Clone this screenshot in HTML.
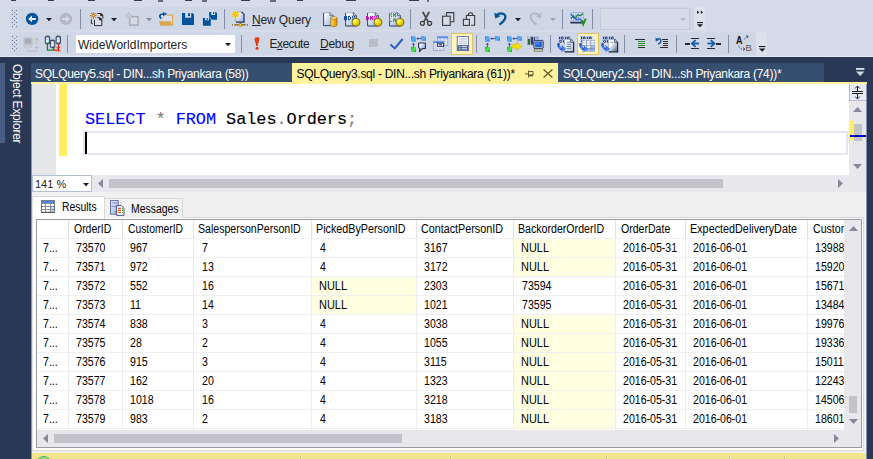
<!DOCTYPE html>
<html><head><meta charset="utf-8">
<style>
*{margin:0;padding:0;box-sizing:border-box}
html,body{width:873px;height:459px;overflow:hidden;background:#293955}
body{font-family:"Liberation Sans",sans-serif;font-size:12px;color:#1e1e1e;position:relative}
.a{position:absolute}
#top{left:0;top:0;width:873px;height:57px;background:#d6dbe9;border-bottom:1px solid #e4e8f2}
.tb{background:#cfd6e5}
.sep{width:1px;background:#858fa6}
.grip{width:6px;background-image:radial-gradient(circle at 1px 1px,#5f6a86 0.75px,transparent 1.1px),radial-gradient(circle at 1px 1px,#5f6a86 0.75px,transparent 1.1px);background-size:4px 4px,4px 4px;background-position:0 0,2px 2px}
.tab{top:63px;height:19px;color:#fff;font-size:12px;line-height:19px;white-space:nowrap;background:#364e6f}
.tx{white-space:nowrap;transform-origin:0 50%}
.g{font-size:12.3px;line-height:19px;color:#000;white-space:nowrap;transform-origin:0 0}
.hl{background:#ffffe1}
.h{letter-spacing:-0.36px}
.d{letter-spacing:-0.2px}
.vl{width:1px;background:#ededed;top:220px;height:210px}
.rl{height:1px;background:#f0f0f0;left:37px;width:807px}
svg{position:absolute;overflow:visible}
</style></head><body>
<!-- TOP TOOLBARS -->
<div id="top" class="a"></div>
<div class="a tb" style="left:10px;top:7px;width:684px;height:23px"></div>
<div class="a" style="left:694px;top:7px;width:11px;height:23px;background:#dde1ed"></div>
<div class="a tb" style="left:10px;top:32px;width:746px;height:23px"></div>
<div class="a" style="left:756px;top:32px;width:11px;height:23px;background:#dde1ed"></div>
<div id="menubits"><div class="a" style="left:10.6px;top:0;width:5.0px;height:1px;background:#1e2233;opacity:0.85"></div><div class="a" style="left:48px;top:0;width:6px;height:1px;background:#1e2233;opacity:0.85"></div><div class="a" style="left:88px;top:0;width:6.5px;height:1px;background:#1e2233;opacity:0.85"></div><div class="a" style="left:133.6px;top:0;width:8.8px;height:1px;background:#1e2233;opacity:0.85"></div><div class="a" style="left:158px;top:0;width:5px;height:2px;background:#1e2233;opacity:0.6"></div><div class="a" style="left:185px;top:0;width:6.5px;height:1px;background:#1e2233;opacity:0.85"></div><div class="a" style="left:202px;top:0;width:5px;height:2px;background:#1e2233;opacity:0.6"></div><div class="a" style="left:241.4px;top:0;width:8.3px;height:1px;background:#1e2233;opacity:0.85"></div><div class="a" style="left:270px;top:0;width:6px;height:2px;background:#1e2233;opacity:0.6"></div><div class="a" style="left:297px;top:0;width:6px;height:1px;background:#1e2233;opacity:0.85"></div><div class="a" style="left:346px;top:0;width:10px;height:1px;background:#1e2233;opacity:0.85"></div><div class="a" style="left:409px;top:0;width:10px;height:1px;background:#1e2233;opacity:0.85"></div><div class="a" style="left:427px;top:0;width:1.5px;height:2px;background:#1e2233;opacity:0.6"></div></div>
<div id="tb1">
<svg style="left:12px;top:10px" width="5" height="18" viewBox="0 0 5 18" fill="#717c98" shape-rendering="crispEdges"><rect x="0" y="0" width="1" height="1"/><rect x="4" y="0" width="1" height="1"/><rect x="2" y="2" width="1" height="1"/><rect x="0" y="4" width="1" height="1"/><rect x="4" y="4" width="1" height="1"/><rect x="2" y="6" width="1" height="1"/><rect x="0" y="8" width="1" height="1"/><rect x="4" y="8" width="1" height="1"/><rect x="2" y="10" width="1" height="1"/><rect x="0" y="12" width="1" height="1"/><rect x="4" y="12" width="1" height="1"/><rect x="2" y="14" width="1" height="1"/><rect x="0" y="16" width="1" height="1"/><rect x="4" y="16" width="1" height="1"/></svg>
<!-- back / forward -->
<svg style="left:24px;top:11px" width="16" height="16" viewBox="0 0 16 16"><circle cx="8.1" cy="7.9" r="6.2" fill="#00539c"/><path d="M4 7.9 L8 4.6 V6.9 H11.8 V8.9 H8 V11.2 Z" fill="#e6ebf5"/></svg>
<svg style="left:46px;top:18px" width="6" height="4" viewBox="0 0 6 4"><path d="M0 0H6L3 3.2Z" fill="#1b1b1b"/></svg>
<svg style="left:58px;top:11px" width="16" height="16" viewBox="0 0 16 16"><circle cx="8" cy="7.9" r="6.2" fill="#b3b8c4"/><path d="M12 7.9 L8 4.6 V6.9 H4.2 V8.9 H8 V11.2 Z" fill="#d6dbe9"/></svg>
<div class="a sep" style="left:80px;top:9px;height:20px"></div>
<!-- new project -->
<svg style="left:89px;top:11px" width="16" height="16" viewBox="0 0 16 16"><path d="M8.2 2.5 H11.6 L13.8 4.7 V7.6" fill="none" stroke="#2d2d2d" stroke-width="1"/><path d="M11.2 2 C13 2 14.3 3.4 14.3 5.2 L11.2 5 Z" fill="#2d2d2d"/><path d="M5.5 8.6 V14.6 H12.8 V8.8 L10.6 6.7 H8.2 V8.6 Z" fill="#dcdfea" stroke="none"/><path d="M5.5 8.8 V14.6 H12.8 V8.8 M8.2 6.7 H10.4" fill="none" stroke="#2d2d2d" stroke-width="1"/><path d="M10 6.2 C11.8 6.2 13.3 7.6 13.3 9.4 L10 9.2 Z" fill="#2d2d2d"/><path d="M2.4 8.4 V12.7 H3.8" fill="none" stroke="#2d2d2d" stroke-width="1"/><path d="M4.4 1v6.8M1 4.4h6.8M2 2l4.8 4.8M6.8 2L2 6.8" stroke="#c87a0a" stroke-width="1"/><circle cx="4.4" cy="4.4" r="1.2" fill="#e9dcc4" stroke="#c87a0a" stroke-width="0.9"/></svg>
<svg style="left:111px;top:18px" width="6" height="4" viewBox="0 0 6 4"><path d="M0 0H6L3 3.2Z" fill="#1b1b1b"/></svg>
<!-- add item (disabled) -->
<svg style="left:124px;top:11px" width="16" height="16" viewBox="0 0 16 16"><rect x="5.7" y="5.7" width="8.4" height="8.4" fill="#d9dce7" stroke="#a9adb9" stroke-width="1.6"/><circle cx="4.4" cy="4.4" r="2.8" fill="#d0d5e4"/><path d="M4.4 1.2v6.4M1.2 4.4h6.4M2.2 2.2l4.4 4.4M6.6 2.2L2.2 6.6" stroke="#b4b9c6" stroke-width="0.8"/><circle cx="4.4" cy="4.4" r="1.1" fill="#d6dbe9" stroke="#b4b9c6" stroke-width="0.7"/></svg>
<svg style="left:146px;top:18px" width="6" height="4" viewBox="0 0 6 4"><path d="M0 0H6L3 3.2Z" fill="#8e8e8e"/></svg>
<!-- open -->
<svg style="left:158px;top:11px" width="16" height="16" viewBox="0 0 16 16"><path d="M8.4 4.1 H14.5 V14.6 H4 V9 Z" fill="#dcdde8"/><path d="M8.6 4.1 H14.5 V14.6" fill="none" stroke="#dda347" stroke-width="1"/><path d="M1 10.3 H12.5 L14.6 14.8 H2.5 Z" fill="#d9a550"/><path d="M3.2 7.6 C0.6 5.6 1.4 3 5.2 3" fill="none" stroke="#00539c" stroke-width="1.7"/><path d="M5 1 L9.2 3 L5 5 Z" fill="#00539c"/></svg>
<!-- save -->
<svg style="left:181px;top:12px" width="14" height="14" viewBox="0 0 14 14"><path d="M1 0.9 H11.4 L13 2.5 V12.9 H1 Z" fill="#00539c"/><rect x="4.2" y="0.9" width="6" height="4.8" fill="#dcdfea"/><rect x="7" y="1.2" width="2" height="2.9" fill="#00539c"/></svg>
<!-- save all -->
<svg style="left:202px;top:11px" width="16" height="16" viewBox="0 0 16 16"><path d="M7.1 0.9 H13.8 L15 2.1 V8.7 H7.1 Z" fill="#00539c"/><rect x="9.2" y="0.9" width="4" height="3" fill="#dcdfea"/><rect x="11" y="1.1" width="1.3" height="1.9" fill="#00539c"/><path d="M0.3 6.4 H8 L9.4 7.8 V15.4 H0.3 Z" fill="#cfd6e5"/><path d="M0.9 7 H7.7 L8.8 8.1 V14.8 H0.9 Z" fill="#00539c"/><rect x="3.1" y="7" width="3.8" height="2.3" fill="#dcdfea"/><rect x="4.6" y="7.2" width="1.4" height="1.5" fill="#00539c"/></svg>
<div class="a sep" style="left:224px;top:9px;height:20px"></div>
<!-- new query -->
<svg style="left:232px;top:11px" width="16" height="16" viewBox="0 0 16 16"><defs><linearGradient id="dg" x1="0" y1="0" x2="1" y2="1"><stop offset="0.15" stop-color="#fff"/><stop offset="1" stop-color="#8fa9e2"/></linearGradient></defs><path d="M3.8 1 H9.6 L12 3.4 V11 H3.8 Z" fill="url(#dg)" stroke="#7d8db5" stroke-width="0.7"/><path d="M9.6 1 L12 3.4 V11.2 H4" fill="none" stroke="#2c3a5c" stroke-width="1.2"/><path d="M8.4 11.6V13" stroke="#2c3a5c" stroke-width="1.2"/><path d="M0 13.9H16" stroke="#8a5a00" stroke-width="1.2" stroke-dasharray="1 1.2 4.6 0.2 0 2 4.6 1.2 1 0"/><rect x="7.4" y="12.6" width="2.2" height="2.8" rx="0.8" fill="#ffe11a" stroke="#94650a" stroke-width="0.6"/><circle cx="3.4" cy="3.4" r="3.3" fill="#ffe620"/><path d="M3.4 0.2v6.4M0.2 3.4h6.4M1.1 1.1l4.6 4.6M5.7 1.1L1.1 5.7" stroke="#f59a0c" stroke-width="0.9"/><circle cx="3.4" cy="3.4" r="1" fill="#fff3a0"/></svg>
<div class="a tx" id="nq" style="left:252px;top:11.8px;letter-spacing:-0.12px;font-size:12px;line-height:16px;color:#1e1e1e"><u>N</u>ew Query</div>
<!-- db file -->
<svg style="left:322px;top:11px" width="16" height="16" viewBox="0 0 16 16"><path d="M1.6 1.7 H8 L11 4.7 V14.6 H1.6 Z" fill="url(#dg)" stroke="#9aa6c6" stroke-width="0.8"/><path d="M1.6 2 V14.6 H11 V4.7 L8 1.7" fill="none" stroke="#3d4b6e" stroke-width="1"/><path d="M8 1.7 V4.7 H11" fill="#eef2fb" stroke="#3d4b6e" stroke-width="0.8"/><defs><linearGradient id="cy" x1="0" y1="0" x2="1" y2="0"><stop offset="0" stop-color="#ffd75a"/><stop offset="0.5" stop-color="#f5b21e"/><stop offset="1" stop-color="#d98f0c"/></linearGradient></defs><path d="M8.8 7 V14.2 A3.1 1.3 0 0 0 15 14.2 V7 Z" fill="url(#cy)" stroke="#8a6410" stroke-width="0.7"/><ellipse cx="11.9" cy="7" rx="3.1" ry="1.3" fill="#ffe58a" stroke="#8a6410" stroke-width="0.6"/></svg>
<!-- MDX -->
<svg style="left:344px;top:11px" width="16" height="16" viewBox="0 0 16 16"><defs><radialGradient id="yb" cx="0.35" cy="0.3" r="0.75"><stop offset="0" stop-color="#fffbd0"/><stop offset="0.35" stop-color="#fbe51c"/><stop offset="1" stop-color="#c9a600"/></radialGradient></defs><path d="M1.6 1.7 H9.4 L12.4 4.7 V15 H1.6 Z" fill="url(#dg)" stroke="#9aa6c6" stroke-width="0.8"/><path d="M1.6 2 V15 H12.4 V4.7 L9.4 1.7" fill="none" stroke="#3d4b6e" stroke-width="1"/><path d="M9.4 1.7 V4.7 H12.4" fill="#eef2fb" stroke="#3d4b6e" stroke-width="0.8"/><path d="M0.0 5.1h1.05v0.85h-1.05zM2.0 5.1h1.05v0.85h-1.05zM0.0 5.9h1.05v0.85h-1.05zM1.0 5.9h1.05v0.85h-1.05zM2.0 5.9h1.05v0.85h-1.05zM0.0 6.7h1.05v0.85h-1.05zM1.0 6.7h1.05v0.85h-1.05zM2.0 6.7h1.05v0.85h-1.05zM0.0 7.5h1.05v0.85h-1.05zM2.0 7.5h1.05v0.85h-1.05zM0.0 8.3h1.05v0.85h-1.05zM2.0 8.3h1.05v0.85h-1.05zM4.0 5.1h1.05v0.85h-1.05zM5.0 5.1h1.05v0.85h-1.05zM4.0 5.9h1.05v0.85h-1.05zM6.0 5.9h1.05v0.85h-1.05zM4.0 6.7h1.05v0.85h-1.05zM6.0 6.7h1.05v0.85h-1.05zM4.0 7.5h1.05v0.85h-1.05zM6.0 7.5h1.05v0.85h-1.05zM4.0 8.3h1.05v0.85h-1.05zM5.0 8.3h1.05v0.85h-1.05zM8.0 5.1h1.05v0.85h-1.05zM10.0 5.1h1.05v0.85h-1.05zM8.0 5.9h1.05v0.85h-1.05zM10.0 5.9h1.05v0.85h-1.05zM9.0 6.7h1.05v0.85h-1.05zM8.0 7.5h1.05v0.85h-1.05zM10.0 7.5h1.05v0.85h-1.05zM8.0 8.3h1.05v0.85h-1.05zM10.0 8.3h1.05v0.85h-1.05z" fill="#1c4a9c"/><circle cx="12" cy="11.3" r="4" fill="url(#yb)" stroke="#6e5c00" stroke-width="0.8"/></svg>
<svg style="left:366px;top:11px" width="16" height="16" viewBox="0 0 16 16"><path d="M1.6 1.7 H9.4 L12.4 4.7 V15 H1.6 Z" fill="url(#dg)" stroke="#9aa6c6" stroke-width="0.8"/><path d="M1.6 2 V15 H12.4 V4.7 L9.4 1.7" fill="none" stroke="#3d4b6e" stroke-width="1"/><path d="M9.4 1.7 V4.7 H12.4" fill="#eef2fb" stroke="#3d4b6e" stroke-width="0.8"/><path d="M0.0 5.1h1.05v0.85h-1.05zM1.0 5.1h1.05v0.85h-1.05zM0.0 5.9h1.05v0.85h-1.05zM2.0 5.9h1.05v0.85h-1.05zM0.0 6.7h1.05v0.85h-1.05zM2.0 6.7h1.05v0.85h-1.05zM0.0 7.5h1.05v0.85h-1.05zM2.0 7.5h1.05v0.85h-1.05zM0.0 8.3h1.05v0.85h-1.05zM1.0 8.3h1.05v0.85h-1.05zM4.0 5.1h1.05v0.85h-1.05zM6.0 5.1h1.05v0.85h-1.05zM4.0 5.9h1.05v0.85h-1.05zM5.0 5.9h1.05v0.85h-1.05zM6.0 5.9h1.05v0.85h-1.05zM4.0 6.7h1.05v0.85h-1.05zM5.0 6.7h1.05v0.85h-1.05zM6.0 6.7h1.05v0.85h-1.05zM4.0 7.5h1.05v0.85h-1.05zM6.0 7.5h1.05v0.85h-1.05zM4.0 8.3h1.05v0.85h-1.05zM6.0 8.3h1.05v0.85h-1.05zM8.0 5.1h1.05v0.85h-1.05zM10.0 5.1h1.05v0.85h-1.05zM8.0 5.9h1.05v0.85h-1.05zM10.0 5.9h1.05v0.85h-1.05zM9.0 6.7h1.05v0.85h-1.05zM8.0 7.5h1.05v0.85h-1.05zM10.0 7.5h1.05v0.85h-1.05zM8.0 8.3h1.05v0.85h-1.05zM10.0 8.3h1.05v0.85h-1.05z" fill="#c218b4"/><circle cx="12" cy="11.3" r="4" fill="url(#yb)" stroke="#6e5c00" stroke-width="0.8"/></svg>
<svg style="left:388px;top:11px" width="16" height="16" viewBox="0 0 16 16"><path d="M1.6 1.7 H9.4 L12.4 4.7 V15 H1.6 Z" fill="url(#dg)" stroke="#9aa6c6" stroke-width="0.8"/><path d="M1.6 2 V15 H12.4 V4.7 L9.4 1.7" fill="none" stroke="#3d4b6e" stroke-width="1"/><path d="M9.4 1.7 V4.7 H12.4" fill="#eef2fb" stroke="#3d4b6e" stroke-width="0.8"/><path d="M1.0 2.1h1.05v0.85h-1.05zM3.0 2.1h1.05v0.85h-1.05zM1.0 2.9h1.05v0.85h-1.05zM3.0 2.9h1.05v0.85h-1.05zM2.0 3.7h1.05v0.85h-1.05zM1.0 4.5h1.05v0.85h-1.05zM3.0 4.5h1.05v0.85h-1.05zM1.0 5.3h1.05v0.85h-1.05zM3.0 5.3h1.05v0.85h-1.05zM5.0 2.1h1.05v0.85h-1.05zM7.0 2.1h1.05v0.85h-1.05zM5.0 2.9h1.05v0.85h-1.05zM6.0 2.9h1.05v0.85h-1.05zM7.0 2.9h1.05v0.85h-1.05zM5.0 3.7h1.05v0.85h-1.05zM6.0 3.7h1.05v0.85h-1.05zM7.0 3.7h1.05v0.85h-1.05zM5.0 4.5h1.05v0.85h-1.05zM7.0 4.5h1.05v0.85h-1.05zM5.0 5.3h1.05v0.85h-1.05zM7.0 5.3h1.05v0.85h-1.05z" fill="#2e9e5e"/><path d="M1.0 7.0h1.05v0.85h-1.05zM1.0 7.8h1.05v0.85h-1.05zM1.0 8.6h1.05v0.85h-1.05zM1.0 9.4h1.05v0.85h-1.05zM1.0 10.2h1.05v0.85h-1.05zM2.0 10.2h1.05v0.85h-1.05zM3.0 10.2h1.05v0.85h-1.05zM6.0 7.0h1.05v0.85h-1.05zM5.0 7.8h1.05v0.85h-1.05zM7.0 7.8h1.05v0.85h-1.05zM5.0 8.6h1.05v0.85h-1.05zM6.0 8.6h1.05v0.85h-1.05zM7.0 8.6h1.05v0.85h-1.05zM5.0 9.4h1.05v0.85h-1.05zM7.0 9.4h1.05v0.85h-1.05zM5.0 10.2h1.05v0.85h-1.05zM7.0 10.2h1.05v0.85h-1.05z" fill="#2e9e5e"/><circle cx="12" cy="11.3" r="4" fill="url(#yb)" stroke="#6e5c00" stroke-width="0.8"/></svg>
<div class="a sep" style="left:410px;top:9px;height:20px"></div>
<!-- cut copy paste -->
<svg style="left:419px;top:11px" width="16" height="16" viewBox="0 0 16 16"><path d="M3.2 1 L4.6 1 L9.6 10.6 L8.6 11 Z M10.8 1 L9.4 1 L4.4 10.6 L5.4 11 Z" fill="#3d3d3d" stroke="#3d3d3d" stroke-width="0.5"/><circle cx="3.4" cy="12.3" r="2" fill="none" stroke="#3d3d3d" stroke-width="1.3"/><circle cx="10.6" cy="12.3" r="2" fill="none" stroke="#3d3d3d" stroke-width="1.3"/></svg>
<svg style="left:441px;top:11px" width="16" height="16" viewBox="0 0 16 16"><path d="M5.5 5 V1.6 H12.8 V10.8 H9.4" fill="none" stroke="#3d3d3d" stroke-width="1.1"/><rect x="1.6" y="5.2" width="7.6" height="9.2" fill="#d6dbe9" stroke="#3d3d3d" stroke-width="1.1"/></svg>
<svg style="left:462px;top:11px" width="16" height="16" viewBox="0 0 16 16"><path d="M4.4 8 V4.5 H12.6 V14.3 H9" fill="#d9dce8" stroke="#3d3d3d" stroke-width="1.1"/><path d="M6.2 4.3 C6.2 0.8 10.8 0.8 10.8 4.3" fill="none" stroke="#3d3d3d" stroke-width="1.1"/><rect x="1.4" y="8.4" width="6" height="6" fill="#d6dbe9" stroke="#3d3d3d" stroke-width="1.1"/></svg>
<div class="a sep" style="left:484px;top:9px;height:20px"></div>
<!-- undo redo -->
<svg style="left:493px;top:11px" width="16" height="16" viewBox="0 0 16 16"><path d="M3.4 4.4 C8 0.2 13.6 3.2 12 7.6 C11 10.2 8.6 12 6.4 13.6" fill="none" stroke="#00539c" stroke-width="2.3"/><path d="M1.2 1.6 L2.2 7.4 L7.4 5.2 Z" fill="#00539c"/></svg>
<svg style="left:515px;top:18px" width="6" height="4" viewBox="0 0 6 4"><path d="M0 0H6L3 3.2Z" fill="#1b1b1b"/></svg>
<svg style="left:528px;top:11px" width="16" height="16" viewBox="0 0 16 16"><path d="M11.6 4.4 C7 0.2 1.4 3.2 3 7.6 C4 10.2 6.4 12 8.6 13.6" fill="none" stroke="#b3b8c4" stroke-width="2.3"/><path d="M13.8 1.6 L12.8 7.4 L7.6 5.2 Z" fill="#b3b8c4"/></svg>
<svg style="left:550px;top:18px" width="6" height="4" viewBox="0 0 6 4"><path d="M0 0H6L3 3.2Z" fill="#9ea3ae"/></svg>
<div class="a sep" style="left:562px;top:9px;height:20px"></div>
<!-- chart -->
<svg style="left:570px;top:11px" width="17" height="16" viewBox="0 0 17 16"><rect x="0.5" y="1.2" width="13" height="10" fill="#f4f7fe"/><path d="M0.5 1.7H13.5M0.5 4.2H13.5M0.5 6.7H13.5M0.5 9.2H13.5M1 1.2V11.2M3.5 1.2V11.2M6 1.2V11.2M8.5 1.2V11.2M11 1.2V11.2M13.4 1.2V11.2" stroke="#6f90e0" stroke-width="0.6"/><path d="M0.3 11.6 H13.8" stroke="#26365a" stroke-width="1.8"/><path d="M1 7.6 L3.4 5 L5.6 6.8 L8 3.6 L10 4.8 L13 2.6" fill="none" stroke="#1f8a2f" stroke-width="1.2"/><path d="M1 2.8 L3.6 6.6 L6.6 8.6 L9 8 L12.6 9.8" fill="none" stroke="#2356d8" stroke-width="1.2"/><path d="M11.6 9.4 L13.2 13.4 L15.8 7.6" fill="none" stroke="#1f8f1f" stroke-width="1.9"/></svg>
<div class="a sep" style="left:592px;top:9px;height:20px"></div>
<div class="a" style="left:600px;top:8px;width:90px;height:22px;border:1px solid #c3cadb;background:#d6dbe9"></div>
<svg style="left:680px;top:18px" width="6" height="4" viewBox="0 0 6 4"><path d="M0 0H6L3 3.2Z" fill="#b3b8c4"/></svg>
<!-- overflow -->
<svg style="left:697px;top:10px" width="7" height="18" viewBox="0 0 7 18"><path d="M0 0.4 L2.2 2.2 L0 4 Z M3.8 0.4 L6 2.2 L3.8 4 Z" fill="#1b1b1b"/><rect x="0" y="12" width="6" height="1.1" fill="#1b1b1b"/><path d="M0 14.2 H6 L3 17.2 Z" fill="#1b1b1b"/></svg>
</div><!--/tb1-->
<div id="tb2">
<svg style="left:12px;top:36px" width="5" height="16" viewBox="0 0 5 16" fill="#717c98" shape-rendering="crispEdges"><rect x="0" y="0" width="1" height="1"/><rect x="4" y="0" width="1" height="1"/><rect x="2" y="2" width="1" height="1"/><rect x="0" y="4" width="1" height="1"/><rect x="4" y="4" width="1" height="1"/><rect x="2" y="6" width="1" height="1"/><rect x="0" y="8" width="1" height="1"/><rect x="4" y="8" width="1" height="1"/><rect x="2" y="10" width="1" height="1"/><rect x="0" y="12" width="1" height="1"/><rect x="4" y="12" width="1" height="1"/><rect x="2" y="14" width="1" height="1"/></svg>
<!-- grey computer (disabled connect) -->
<svg style="left:23px;top:36px" width="16" height="16" viewBox="0 0 16 16"><rect x="0.6" y="1.6" width="9" height="7.8" rx="0.6" fill="#bcc0ca"/><rect x="1.8" y="2.7" width="6.4" height="4.8" fill="#a9adb8"/><rect x="0.8" y="10" width="8.6" height="2.2" rx="0.5" fill="#c6cad3"/><rect x="11.6" y="1.3" width="4" height="7" rx="0.5" fill="#c9cdd6"/><rect x="12.4" y="2.6" width="2.4" height="1.2" fill="#b4b8c2"/><path d="M4.6 12.6 V15.2 H13.6 V11" fill="none" stroke="#b9bdc7" stroke-width="1"/><path d="M11.3 12 L13.6 9.4 L15.9 12 Z" fill="#b9bdc7"/></svg>
<!-- servers w/ red x -->
<svg style="left:45px;top:36px" width="16" height="16" viewBox="0 0 16 16"><defs><linearGradient id="sg" x1="0" y1="0" x2="0" y2="1"><stop offset="0" stop-color="#3d4f80"/><stop offset="0.3" stop-color="#9fb8ea"/><stop offset="0.7" stop-color="#c9d9f6"/><stop offset="1" stop-color="#6f8ac6"/></linearGradient></defs><path d="M2.4 7.6 V14.1 H8.7 V11.6" fill="none" stroke="#138a13" stroke-width="1.3"/><path d="M8.7 14.1 H12 M13.4 7.6 V12" stroke="#e81c0c" stroke-width="1.1"/><rect x="0.3" y="0.2" width="4.4" height="7.6" rx="0.9" fill="url(#sg)" stroke="#2a3550" stroke-width="0.9"/><rect x="1.2" y="1.5" width="2.2" height="1.6" fill="#f4f8ff"/><rect x="1.2" y="3.9000000000000004" width="2.2" height="1.8" fill="#f4f8ff"/><rect x="2.9" y="5.8" width="1.1" height="1.1" fill="#22b022"/><rect x="5.4" y="4.1" width="4.4" height="7.6" rx="0.9" fill="url(#sg)" stroke="#2a3550" stroke-width="0.9"/><rect x="6.300000000000001" y="5.3999999999999995" width="2.2" height="1.6" fill="#f4f8ff"/><rect x="6.300000000000001" y="7.8" width="2.2" height="1.8" fill="#f4f8ff"/><rect x="8.0" y="9.7" width="1.1" height="1.1" fill="#22b022"/><rect x="11.1" y="0.2" width="4.4" height="7.6" rx="0.9" fill="url(#sg)" stroke="#2a3550" stroke-width="0.9"/><rect x="12.0" y="1.5" width="2.2" height="1.6" fill="#f4f8ff"/><rect x="12.0" y="3.9000000000000004" width="2.2" height="1.8" fill="#f4f8ff"/><rect x="13.7" y="5.8" width="1.1" height="1.1" fill="#e8200e"/><path d="M11.4 10.8 L15.4 15.2 M15.4 10.8 L11.4 15.2 M13.4 10 V15.8" stroke="#f01a0a" stroke-width="1"/></svg>
<div class="a sep" style="left:67px;top:35px;height:18px"></div>
<div class="a" style="left:75.5px;top:35px;width:159px;height:18px;background:#fff"></div>
<div class="a tx" id="db" style="left:78px;top:37px;font-size:12px;line-height:16px;color:#1e1e1e">WideWorldImporters</div>
<svg style="left:225px;top:43px" width="6" height="4" viewBox="0 0 6 4"><path d="M0 0H6L3 3.2Z" fill="#1b1b1b"/></svg>
<div class="a sep" style="left:241px;top:35px;height:18px"></div>
<!-- execute -->
<svg style="left:252.5px;top:36px" width="8" height="15" viewBox="0 0 8 15"><path d="M1.6 3 C1.6 0.4 6.4 0.4 6.4 3 C6.2 5.6 5 7.6 4.7 10 H3.3 C3 7.6 1.8 5.6 1.6 3 Z" fill="#e23c0a"/><circle cx="4" cy="12.3" r="1.5" fill="#e23c0a"/><path d="M2.6 2.4 C2.8 1.6 4 1.4 4.4 1.8" stroke="#ff9a6a" stroke-width="0.8" fill="none"/></svg>
<div class="a tx" id="ex" style="left:269.5px;top:36px;letter-spacing:-0.55px;font-size:12px;line-height:16px;color:#1e1e1e">E<u>x</u>ecute</div>
<div class="a tx" id="dbg" style="left:320px;top:36px;letter-spacing:-0.25px;font-size:12px;line-height:16px;color:#1e1e1e"><u>D</u>ebug</div>
<div class="a" style="left:369px;top:39px;width:9px;height:8px;background:#b9bdc8"></div>
<svg style="left:389px;top:37px" width="16" height="14" viewBox="0 0 16 14"><path d="M1.4 7.6 L5.8 11.4 L13.6 2" fill="none" stroke="#2860c6" stroke-width="2"/></svg>
<!-- estimated plan-like icon -->
<svg style="left:410px;top:36px" width="16" height="16" viewBox="0 0 16 16"><defs><linearGradient id="bq" x1="0" y1="0" x2="1" y2="1"><stop offset="0" stop-color="#2a78dc"/><stop offset="0.5" stop-color="#58b2f8"/><stop offset="1" stop-color="#2a78dc"/></linearGradient><linearGradient id="gq" x1="0" y1="0" x2="1" y2="1"><stop offset="0" stop-color="#18b018"/><stop offset="0.5" stop-color="#5ae05a"/><stop offset="1" stop-color="#18b018"/></linearGradient><linearGradient id="bub" x1="0" y1="0" x2="1" y2="1"><stop offset="0.2" stop-color="#fff"/><stop offset="1" stop-color="#3f82ee"/></linearGradient></defs><rect x="1" y="0.3" width="4.7" height="5.4" fill="url(#bq)"/><rect x="11" y="0.3" width="5" height="4.4" fill="url(#bq)"/><path d="M7 2.6 H11 M7 2.6 L8.2 1.4 M7 2.6 L8.2 3.8" stroke="#2a4a8a" stroke-width="0.9" fill="none"/><rect x="1" y="11" width="5" height="5" fill="url(#gq)"/><path d="M3.4 11 V7.4 M3.4 7.2 L2.2 8.6 M3.4 7.2 L4.6 8.6" stroke="#2a4a8a" stroke-width="0.9" fill="none"/><path d="M9 7 H15.4 V12.4 L12 12.8 L9.4 15.6 L10 12.6 L8.6 11.6 V7.4 Z" fill="url(#bub)" stroke="#2a3040" stroke-width="1.1" stroke-linejoin="round"/></svg>
<!-- windows icon -->
<svg style="left:433px;top:36px" width="16" height="16" viewBox="0 0 16 16"><rect x="4.4" y="0.6" width="10.4" height="9" fill="#e3e9f6" stroke="#7f98d2" stroke-width="0.7"/><rect x="4.4" y="0.6" width="10.4" height="1.8" fill="#5a90ea"/><path d="M6 4H8.4M10 4H12.6M10 6H12.6M10 8H12.6" stroke="#a9b2c8" stroke-width="0.9"/><rect x="0.4" y="5.2" width="10.4" height="9.4" fill="#e3e9f6" stroke="#7f98d2" stroke-width="0.7"/><rect x="0.4" y="5.2" width="10.4" height="1.9" fill="#5a90ea"/><path d="M2 9H3.6M2 11H3.6M2 13H4.6M6 13H8.6" stroke="#a9b2c8" stroke-width="0.9"/><rect x="4.6" y="7.2" width="6" height="3.2" fill="#f6f8fd" stroke="#2a3560" stroke-width="1"/><path d="M6.2 8.8H9" stroke="#111" stroke-width="1"/></svg>
<!-- selected: results to grid? (query options) -->
<div class="a" style="left:451px;top:33px;width:22px;height:22px;background:#fdf4bf;border:1px solid #e5c365"></div>
<svg style="left:456px;top:36px" width="14" height="16" viewBox="0 0 14 16"><rect x="1.2" y="0.6" width="11.4" height="14" fill="#fff" stroke="#5a6a94" stroke-width="0.9"/><path d="M3 3H11M3 5.2H11M3 7.4H11" stroke="#9aa6c4" stroke-width="0.8"/><rect x="1.6" y="9" width="10.6" height="5.4" fill="#4f648f"/><path d="M3 10.6H4.4M5.6 10.6H11M3 12.8H4.4M5.6 12.8H11" stroke="#e8eefb" stroke-width="1"/></svg>
<div class="a sep" style="left:476px;top:35px;height:18px"></div>
<svg style="left:484px;top:36px" width="16" height="16" viewBox="0 0 16 16"><rect x="1" y="0.3" width="4.7" height="5.4" fill="url(#bq)"/><rect x="11" y="0.3" width="5" height="4.4" fill="url(#bq)"/><path d="M7 2.6 H11 M7 2.6 L8.2 1.4 M7 2.6 L8.2 3.8" stroke="#2a4a8a" stroke-width="0.9" fill="none"/><rect x="1" y="11" width="5" height="5" fill="url(#gq)"/><path d="M3.4 11 V7.4 M3.4 7.2 L2.2 8.6 M3.4 7.2 L4.6 8.6" stroke="#2a4a8a" stroke-width="0.9" fill="none"/></svg>
<svg style="left:506px;top:36px" width="16" height="16" viewBox="0 0 16 16"><rect x="1" y="0.3" width="4.7" height="5.4" fill="url(#bq)"/><rect x="11" y="0.3" width="5" height="4.4" fill="url(#bq)"/><path d="M7 2.6 H11 M7 2.6 L8.2 1.4 M7 2.6 L8.2 3.8" stroke="#2a4a8a" stroke-width="0.9" fill="none"/><rect x="1" y="11" width="5" height="5" fill="url(#gq)"/><path d="M3.4 11 V7.4 M3.4 7.2 L2.2 8.6 M3.4 7.2 L4.6 8.6" stroke="#2a4a8a" stroke-width="0.9" fill="none"/><path d="M5.8 8.6 H10.6 V6.2 L15.8 10.3 L10.6 14.4 V12 H5.8 Z" fill="#f7e40e" stroke="#b8a600" stroke-width="0.5"/></svg>
<svg style="left:527px;top:36px" width="17" height="16" viewBox="0 0 17 16"><rect x="0.4" y="0.6" width="11" height="8.2" fill="#dfe6f6" stroke="#8c9cc0" stroke-width="0.5"/><rect x="0.8" y="2.6" width="2.2" height="6" fill="#1d7a1d"/><rect x="3.6" y="1" width="2.4" height="7.6" fill="#3a3590"/><rect x="6.6" y="1" width="1.6" height="7.6" fill="#4a4a5a"/><rect x="8.8" y="1" width="2.2" height="2.6" fill="#7fb5e8"/><rect x="6.8" y="4.4" width="9.4" height="8" rx="0.8" fill="#aeb8d0" stroke="#2f3d66" stroke-width="1"/><rect x="8.2" y="5.6" width="6.6" height="5.4" fill="#1a66ee"/><rect x="9.2" y="6.4" width="3" height="2" fill="#4a92ff"/><rect x="7.2" y="13" width="8.6" height="2.2" fill="#d8d48a" stroke="#4a5678" stroke-width="0.6"/></svg>
<div class="a sep" style="left:550px;top:35px;height:18px"></div>
<!-- results to text -->
<svg style="left:555px;top:33px" width="22" height="22" viewBox="0 0 22 22"><defs><linearGradient id="ar" x1="0" y1="0" x2="1" y2="1"><stop offset="0" stop-color="#1c3fb0"/><stop offset="0.5" stop-color="#4f8cf6"/><stop offset="1" stop-color="#1638a8"/></linearGradient><linearGradient id="d1" x1="0" y1="0" x2="1" y2="1"><stop offset="0.3" stop-color="#fff"/><stop offset="1" stop-color="#9fb0cc"/></linearGradient><linearGradient id="d3" x1="0" y1="0" x2="1" y2="1"><stop offset="0.35" stop-color="#fff"/><stop offset="1" stop-color="#4a5878"/></linearGradient></defs><rect x="3.1" y="3.1" width="12.5" height="3.3" fill="#b7caf2"/><rect x="3.1" y="6.3" width="6.2" height="3.4" fill="#b7caf2"/><path d="M4.6 3.8V6.2M10.7 3.8V6.2M8.6 7.2V9.5" stroke="#161616" stroke-width="0.9"/><ellipse cx="7.3" cy="5" rx="1" ry="1.1" fill="none" stroke="#161616" stroke-width="0.8"/><ellipse cx="13.3" cy="5" rx="1" ry="1.1" fill="none" stroke="#161616" stroke-width="0.8"/><ellipse cx="5.6" cy="8.4" rx="1" ry="1.1" fill="none" stroke="#161616" stroke-width="0.8"/><path d="M9.6 6.4 H15.6 L18.6 9.4 V18.8 H9.6 Z" fill="url(#d1)" stroke="#8a96b4" stroke-width="0.6"/><path d="M15.6 6.4 L18.6 9.4 V18.8 H9.8" fill="none" stroke="#1f2a44" stroke-width="1.2"/><path d="M15.6 6.4 V9.4 H18.6" fill="#dfe6f4" stroke="#1f2a44" stroke-width="0.7"/><path d="M11.5 9.2H15M11.5 11.3H16M11.5 13.4H16M11.5 15.4H16" stroke="#5a78a8" stroke-width="0.9"/><path d="M3.7 10.2 C3 13.8 4.8 16.2 8 16.3" fill="none" stroke="url(#ar)" stroke-width="2.6"/><path d="M6.4 11.9 L11.2 15.9 L6.2 19.5 L7.4 16.2 Z" fill="url(#ar)"/></svg>
<div class="a" style="left:577px;top:33px;width:22px;height:22px;background:#fdf4bf;border:1px solid #e5c365"></div>
<svg style="left:577px;top:33px" width="22" height="22" viewBox="0 0 22 22"><rect x="3.1" y="3.1" width="12.5" height="3.3" fill="#b7caf2"/><rect x="3.1" y="6.3" width="6.2" height="3.4" fill="#b7caf2"/><path d="M4.6 3.8V6.2M10.7 3.8V6.2M8.6 7.2V9.5" stroke="#161616" stroke-width="0.9"/><ellipse cx="7.3" cy="5" rx="1" ry="1.1" fill="none" stroke="#161616" stroke-width="0.8"/><ellipse cx="13.3" cy="5" rx="1" ry="1.1" fill="none" stroke="#161616" stroke-width="0.8"/><ellipse cx="5.6" cy="8.4" rx="1" ry="1.1" fill="none" stroke="#161616" stroke-width="0.8"/><rect x="5" y="6.2" width="13" height="12.3" fill="#7f8fb4"/><rect x="5" y="6.2" width="13" height="0.9" fill="#dfe6f6"/><rect x="5.5" y="7.6" width="3.5" height="2.1" fill="#fff"/><rect x="9.8" y="7.6" width="3.5" height="2.1" fill="#fff"/><rect x="14.1" y="7.6" width="3.5" height="2.1" fill="#fff"/><rect x="5.5" y="10.2" width="3.5" height="2.1" fill="#fff"/><rect x="9.8" y="10.2" width="3.5" height="2.1" fill="#fff"/><rect x="14.1" y="10.2" width="3.5" height="2.1" fill="#e6eefc"/><rect x="5.5" y="12.9" width="3.5" height="2.1" fill="#fff"/><rect x="9.8" y="12.9" width="3.5" height="2.1" fill="#e6eefc"/><rect x="14.1" y="12.9" width="3.5" height="2.1" fill="#9fc0f4"/><rect x="5.5" y="15.8" width="3.5" height="2.3" fill="#cfe0fa"/><rect x="9.8" y="15.8" width="3.5" height="2.3" fill="#9fc0f4"/><rect x="14.1" y="15.8" width="3.5" height="2.3" fill="#8ab4f0"/><path d="M3.7 10.2 C3 13.8 4.8 16.2 8 16.3" fill="none" stroke="url(#ar)" stroke-width="2.6"/><path d="M6.4 11.9 L11.2 15.9 L6.2 19.5 L7.4 16.2 Z" fill="url(#ar)"/></svg>
<svg style="left:598.8px;top:33px" width="22" height="22" viewBox="0 0 22 22"><rect x="3.1" y="3.1" width="12.5" height="3.3" fill="#b7caf2"/><rect x="3.1" y="6.3" width="6.2" height="3.4" fill="#b7caf2"/><path d="M4.6 3.8V6.2M10.7 3.8V6.2M8.6 7.2V9.5" stroke="#161616" stroke-width="0.9"/><ellipse cx="7.3" cy="5" rx="1" ry="1.1" fill="none" stroke="#161616" stroke-width="0.8"/><ellipse cx="13.3" cy="5" rx="1" ry="1.1" fill="none" stroke="#161616" stroke-width="0.8"/><ellipse cx="5.6" cy="8.4" rx="1" ry="1.1" fill="none" stroke="#161616" stroke-width="0.8"/><path d="M9.6 6.4 H15.6 L18.6 9.4 V18.8 H9.6 Z" fill="url(#d3)" stroke="#8a96b4" stroke-width="0.6"/><path d="M15.6 6.4 L18.6 9.4 V18.8 H9.8" fill="none" stroke="#1f2a44" stroke-width="1.2"/><path d="M15.6 6.4 V9.4 H18.6" fill="#dfe6f4" stroke="#1f2a44" stroke-width="0.7"/><path d="M11.6 9.4H14.2" stroke="#6a90d8" stroke-width="0.9"/><path d="M3.7 10.2 C3 13.8 4.8 16.2 8 16.3" fill="none" stroke="url(#ar)" stroke-width="2.6"/><path d="M6.4 11.9 L11.2 15.9 L6.2 19.5 L7.4 16.2 Z" fill="url(#ar)"/></svg>
<div class="a sep" style="left:624px;top:35px;height:18px"></div>
<!-- comment / uncomment -->
<svg style="left:634px;top:38px" width="12" height="11" viewBox="0 0 12 11" shape-rendering="crispEdges"><path d="M1 1.5H11M4 9.5H11" stroke="#2b2b2b" stroke-width="1"/><path d="M4 3.5H11M4 5.5H11M4 7.5H11" stroke="#2f8f2f" stroke-width="1"/></svg>
<svg style="left:655px;top:37px" width="14" height="13" viewBox="0 0 14 13"><path d="M7 2.5H13M5 10.5H13M8 4.5H13M8 6.5H13M8 8.5H13" stroke="#2b2b2b" stroke-width="1" shape-rendering="crispEdges"/><path d="M2 2.4 C4.4 0.6 6.8 2.6 5.6 4.8 C5 5.8 4 6.6 3.2 7.4" fill="none" stroke="#0f59a6" stroke-width="1.5"/><path d="M0.4 0.4 L0.8 4.4 L4 3 Z" fill="#0f59a6"/></svg>
<div class="a sep" style="left:676px;top:35px;height:18px"></div>
<!-- outdent / indent -->
<svg style="left:685px;top:37px" width="15" height="13" viewBox="0 0 15 13"><path d="M6 1.5H14M6 11.5H14" stroke="#2b2b2b" stroke-width="1" shape-rendering="crispEdges"/><path d="M0 6.5H5" stroke="#2b2b2b" stroke-width="2" shape-rendering="crispEdges"/><path d="M8.4 6.5H14" stroke="#0f59a6" stroke-width="1.8"/><path d="M10.6 3.2 L7 6.5 L10.6 9.8" fill="none" stroke="#0f59a6" stroke-width="1.8"/></svg>
<svg style="left:707px;top:37px" width="15" height="13" viewBox="0 0 15 13"><path d="M0 1.5H8M0 11.5H8" stroke="#2b2b2b" stroke-width="1" shape-rendering="crispEdges"/><path d="M9 6.5H14" stroke="#2b2b2b" stroke-width="2" shape-rendering="crispEdges"/><path d="M0.4 6.5H6" stroke="#0f59a6" stroke-width="1.8"/><path d="M3.8 3.2 L7.4 6.5 L3.8 9.8" fill="none" stroke="#0f59a6" stroke-width="1.8"/></svg>
<div class="a sep" style="left:728px;top:35px;height:18px"></div>
<!-- A->B -->
<svg style="left:736px;top:35px" width="17" height="17" viewBox="0 0 17 17"><text x="0" y="8.8" font-family="Liberation Sans" font-size="10" font-weight="bold" fill="#0a0a0a" textLength="6.4" lengthAdjust="spacingAndGlyphs">A</text><text x="9.4" y="16.4" font-family="Liberation Sans" font-size="9.4" fill="#555">B</text><path d="M2.6 10.4 C3.2 13.6 5.6 14.6 8.4 14" fill="none" stroke="#2b3b66" stroke-width="1" stroke-dasharray="1 1.2"/><path d="M7.2 12.6 L9 14 L7.2 15.4" fill="none" stroke="#2b3b66" stroke-width="0.9"/><path d="M8.4 4.4 C9 2.8 10 2 11.4 1.6" fill="none" stroke="#2b3b66" stroke-width="0.9" stroke-dasharray="1 1.2"/><path d="M10 0.8 L12 1.2 L11.4 3.2" fill="none" stroke="#2b3b66" stroke-width="0.9"/></svg>
<svg style="left:759px;top:46px" width="7" height="7" viewBox="0 0 7 7"><rect x="0" y="0" width="6.4" height="1.1" fill="#1b1b1b"/><path d="M0 2.4 H6.4 L3.2 5.8 Z" fill="#1b1b1b"/></svg>
</div><!--/tb2-->

<!-- LEFT STRIP -->
<div class="a" style="left:0;top:63px;width:5px;height:80px;background:#4a5d84"></div>
<div class="a" id="oe" style="left:24px;top:63.5px;color:#fff;font-size:12px;line-height:14px;white-space:nowrap;letter-spacing:-0.22px;transform-origin:0 0;transform:rotate(90deg)">Object Explorer</div>

<!-- DOC TABS -->
<div class="a tab" style="left:31px;width:261px"><span class="a tx" id="t1" style="left:4px;top:1.5px;letter-spacing:-0.29px">SQLQuery5.sql - DIN...sh Priyankara (58))</span></div>
<div class="a tab" style="left:292px;width:266px;height:21px;background:#fff29d;color:#000"><span class="a tx" id="t2" style="left:4.5px;top:1.5px;letter-spacing:-0.28px">SQLQuery3.sql - DIN...sh Priyankara (61))*</span></div>
<div class="a tab" style="left:558px;width:266px"><span class="a tx" id="t3" style="left:5px;top:1.5px;letter-spacing:-0.28px">SQLQuery2.sql - DIN...sh Priyankara (74))*</span></div>
<div class="a" style="left:31px;top:82px;width:836px;height:2px;background:#fff29d"></div>

<!-- EDITOR -->
<div class="a" style="left:32px;top:84px;width:817px;height:91px;background:#fff"></div>
<div class="a" style="left:32px;top:84px;width:24px;height:91px;background:#e6e7e8"></div>
<div class="a" style="left:59.3px;top:84px;width:7.6px;height:72px;background:#ffee62"></div>
<div class="a" style="left:83px;top:131px;width:765px;height:24px;border:2px solid #e6e6f2"></div>
<div class="a" style="left:85px;top:131.5px;width:1.5px;height:22.5px;background:#000"></div>
<div class="a" id="code" style="left:85px;top:107.8px;font-family:'Liberation Mono',monospace;font-size:16.9px;line-height:24px;letter-spacing:-0.06px;-webkit-text-stroke:0.12px;white-space:pre"><span style="color:#00f">SELECT</span> <span style="color:#808080">*</span> <span style="color:#00f">FROM</span> <span style="color:#000">Sales</span><span style="color:#808080">.</span><span style="color:#000">Orders</span><span style="color:#808080">;</span></div>
<!-- editor v scrollbar -->
<div class="a" style="left:849px;top:84px;width:18px;height:108px;background:#e8e8ec"></div>
<div class="a" style="left:849px;top:84px;width:18px;height:17px;background:#e6ebf7;border-left:1px solid #b4bccf;border-bottom:1px solid #b4bccf"></div>
<div class="a" style="left:854px;top:124px;width:8px;height:17px;background:#c2c3c9"></div>
<div class="a" style="left:850px;top:121px;width:4px;height:19px;background:#ffee62"></div>
<div class="a" style="left:850px;top:135px;width:17px;height:2px;background:#0000c8"></div>
<!-- zoom row -->
<div class="a" style="left:32px;top:175px;width:817px;height:17px;background:#e8e8ec"></div>
<div class="a" style="left:32px;top:175px;width:60px;height:17px;background:#fff;border:1px solid #b4bfd8"></div>
<div class="a tx" id="zm" style="left:35px;top:176px;font-size:11px;line-height:16px">141 %</div>
<div class="a" style="left:109px;top:179px;width:614px;height:9px;background:#c2c3c9"></div>

<!-- RESULTS PANE -->
<div class="a" style="left:32px;top:192px;width:835px;height:261px;background:#f0f0f0"></div>
<div class="a" style="left:32px;top:217px;width:832px;height:234px;border:1px solid #dadada;border-left-color:#e2e2e2;border-top-color:#d4d4d4;background:#fff"></div>
<div class="a" style="left:104px;top:198px;width:79px;height:20px;border:1px solid #d9d9d9;border-bottom:none;background:#f2f2f2"></div>
<div class="a" style="left:32px;top:196px;width:73px;height:23px;border:1px solid #d9d9d9;border-bottom:none;border-left-color:#e2e2e2;background:#fff"></div>
<svg style="left:41px;top:200px" width="14" height="13" viewBox="0 0 14 13"><rect x="0.5" y="0.5" width="13" height="12" fill="#fff" stroke="#777b86" stroke-width="1"/><rect x="1" y="1" width="12" height="2.4" fill="#4f86e2"/><rect x="9.5" y="7" width="3.5" height="5" fill="#c4d9fa"/><path d="M1 3.5H13M1 6.5H13M1 9.5H13M4.5 3.6V12M9 3.6V12" stroke="#8a8e98" stroke-width="1" shape-rendering="crispEdges"/><path d="M0.5 12.4H13.5" stroke="#55585f" stroke-width="1.2"/></svg>
<svg style="left:110px;top:200px" width="15" height="16" viewBox="0 0 15 16"><defs><linearGradient id="sv" x1="0" y1="0" x2="1" y2="1"><stop offset="0" stop-color="#e9eef8"/><stop offset="1" stop-color="#9fb4dc"/></linearGradient></defs><rect x="0.6" y="0.6" width="7.6" height="13.6" fill="url(#sv)" stroke="#5a64a0" stroke-width="0.9"/><path d="M1.6 3H7M1.6 6.4H7" stroke="#6a78b0" stroke-width="0.8"/><rect x="4.8" y="11" width="1.6" height="1.4" fill="#3fae3f"/><path d="M6.6 5.6H11.4L14 8.2V15.4H6.6Z" fill="#f6f8fd" stroke="#3d467a" stroke-width="0.9"/><path d="M8 8.4H11M8 10.4H11M8 12.4H11" stroke="#f0502a" stroke-width="1.1"/><path d="M12 8.4H13M12 10.4H13M12 12.4H13" stroke="#3fae3f" stroke-width="1.1"/></svg>
<div class="a g" id="rt" style="left:61.6px;top:197.5px;transform:scaleX(0.845)">Results</div>
<div class="a g" id="mt" style="left:130.8px;top:199.5px;transform:scaleX(0.849)">Messages</div>

<!-- GRID -->
<div class="a" style="left:36px;top:219px;width:826px;height:229px;background:#fff;border:1px solid #9a9ba2"></div>
<div id="grid">
<div class="a hl" style="left:514px;top:239px;width:101px;height:18px"></div>
<div class="a hl" style="left:514px;top:258px;width:101px;height:18px"></div>
<div class="a hl" style="left:312px;top:277px;width:104px;height:18px"></div>
<div class="a hl" style="left:312px;top:296px;width:104px;height:18px"></div>
<div class="a hl" style="left:514px;top:315px;width:101px;height:18px"></div>
<div class="a hl" style="left:514px;top:334px;width:101px;height:18px"></div>
<div class="a hl" style="left:514px;top:353px;width:101px;height:18px"></div>
<div class="a hl" style="left:514px;top:372px;width:101px;height:18px"></div>
<div class="a hl" style="left:514px;top:391px;width:101px;height:18px"></div>
<div class="a hl" style="left:514px;top:410px;width:101px;height:18px"></div>
<div class="a hl" style="left:514px;top:429px;width:101px;height:1px"></div>
<div class="a rl" style="top:238px"></div>
<div class="a rl" style="top:257px"></div>
<div class="a rl" style="top:276px"></div>
<div class="a rl" style="top:295px"></div>
<div class="a rl" style="top:314px"></div>
<div class="a rl" style="top:333px"></div>
<div class="a rl" style="top:352px"></div>
<div class="a rl" style="top:371px"></div>
<div class="a rl" style="top:390px"></div>
<div class="a rl" style="top:409px"></div>
<div class="a rl" style="top:428px"></div>
<div class="a vl" style="left:68px"></div>
<div class="a" style="left:68px;top:220px;width:1px;height:18px;background:#e2e2e2"></div>
<div class="a vl" style="left:122px"></div>
<div class="a" style="left:122px;top:220px;width:1px;height:18px;background:#e2e2e2"></div>
<div class="a vl" style="left:193px"></div>
<div class="a" style="left:193px;top:220px;width:1px;height:18px;background:#e2e2e2"></div>
<div class="a vl" style="left:311px"></div>
<div class="a" style="left:311px;top:220px;width:1px;height:18px;background:#e2e2e2"></div>
<div class="a vl" style="left:416px"></div>
<div class="a" style="left:416px;top:220px;width:1px;height:18px;background:#e2e2e2"></div>
<div class="a vl" style="left:513px"></div>
<div class="a" style="left:513px;top:220px;width:1px;height:18px;background:#e2e2e2"></div>
<div class="a vl" style="left:615px"></div>
<div class="a" style="left:615px;top:220px;width:1px;height:18px;background:#e2e2e2"></div>
<div class="a vl" style="left:685px"></div>
<div class="a" style="left:685px;top:220px;width:1px;height:18px;background:#e2e2e2"></div>
<div class="a vl" style="left:807px"></div>
<div class="a" style="left:807px;top:220px;width:1px;height:18px;background:#e2e2e2"></div>
<div class="a g" style="left:73.6px;top:219.5px;transform:scaleX(0.851)">OrderID</div>
<div class="a g" style="left:127.5px;top:219.5px;transform:scaleX(0.838)">CustomerID</div>
<div class="a g" style="left:198.3px;top:219.5px;transform:scaleX(0.859)">SalespersonPersonID</div>
<div class="a g" style="left:316.3px;top:219.5px;transform:scaleX(0.874)">PickedByPersonID</div>
<div class="a g" style="left:421.3px;top:219.5px;transform:scaleX(0.875)">ContactPersonID</div>
<div class="a g" style="left:517.9px;top:219.5px;transform:scaleX(0.863)">BackorderOrderID</div>
<div class="a g" style="left:620.5px;top:219.5px;transform:scaleX(0.858)">OrderDate</div>
<div class="a g" style="left:690.4px;top:219.5px;transform:scaleX(0.879)">ExpectedDeliveryDate</div>
<div class="a g" style="left:812.5px;top:219.5px;transform:scaleX(0.860)">Custom</div>
<div class="a g" style="left:43.0px;top:238.5px;transform:scaleX(0.86)">7...</div>
<div class="a g" style="left:76.0px;top:238.5px;transform:scaleX(0.86)">73570</div>
<div class="a g" style="left:130.0px;top:238.5px;transform:scaleX(0.86)">967</div>
<div class="a g" style="left:202.0px;top:238.5px;transform:scaleX(0.86)">7</div>
<div class="a g" style="left:319.6px;top:238.5px;transform:scaleX(0.86)">4</div>
<div class="a g" style="left:424.0px;top:238.5px;transform:scaleX(0.86)">3167</div>
<div class="a g" style="left:520.6px;top:238.5px;transform:scaleX(0.89)">NULL</div>
<div class="a g" style="left:622.7px;top:238.5px;transform:scaleX(0.86)">2016-05-31</div>
<div class="a g" style="left:692.9px;top:238.5px;transform:scaleX(0.86)">2016-06-01</div>
<div class="a g" style="left:814.9px;top:238.5px;transform:scaleX(0.86)">13988</div>
<div class="a g" style="left:43.0px;top:257.5px;transform:scaleX(0.86)">7...</div>
<div class="a g" style="left:76.0px;top:257.5px;transform:scaleX(0.86)">73571</div>
<div class="a g" style="left:130.0px;top:257.5px;transform:scaleX(0.86)">972</div>
<div class="a g" style="left:202.0px;top:257.5px;transform:scaleX(0.86)">13</div>
<div class="a g" style="left:319.6px;top:257.5px;transform:scaleX(0.86)">4</div>
<div class="a g" style="left:424.0px;top:257.5px;transform:scaleX(0.86)">3172</div>
<div class="a g" style="left:520.6px;top:257.5px;transform:scaleX(0.89)">NULL</div>
<div class="a g" style="left:622.7px;top:257.5px;transform:scaleX(0.86)">2016-05-31</div>
<div class="a g" style="left:692.9px;top:257.5px;transform:scaleX(0.86)">2016-06-01</div>
<div class="a g" style="left:814.9px;top:257.5px;transform:scaleX(0.86)">15920</div>
<div class="a g" style="left:43.0px;top:276.5px;transform:scaleX(0.86)">7...</div>
<div class="a g" style="left:76.0px;top:276.5px;transform:scaleX(0.86)">73572</div>
<div class="a g" style="left:130.0px;top:276.5px;transform:scaleX(0.86)">552</div>
<div class="a g" style="left:202.0px;top:276.5px;transform:scaleX(0.86)">16</div>
<div class="a g" style="left:318.7px;top:276.5px;transform:scaleX(0.89)">NULL</div>
<div class="a g" style="left:424.0px;top:276.5px;transform:scaleX(0.86)">2303</div>
<div class="a g" style="left:521.5px;top:276.5px;transform:scaleX(0.86)">73594</div>
<div class="a g" style="left:622.7px;top:276.5px;transform:scaleX(0.86)">2016-05-31</div>
<div class="a g" style="left:692.9px;top:276.5px;transform:scaleX(0.86)">2016-06-01</div>
<div class="a g" style="left:814.9px;top:276.5px;transform:scaleX(0.86)">15671</div>
<div class="a g" style="left:43.0px;top:295.5px;transform:scaleX(0.86)">7...</div>
<div class="a g" style="left:76.0px;top:295.5px;transform:scaleX(0.86)">73573</div>
<div class="a g" style="left:130.0px;top:295.5px;transform:scaleX(0.86)">11</div>
<div class="a g" style="left:202.0px;top:295.5px;transform:scaleX(0.86)">14</div>
<div class="a g" style="left:318.7px;top:295.5px;transform:scaleX(0.89)">NULL</div>
<div class="a g" style="left:424.0px;top:295.5px;transform:scaleX(0.86)">1021</div>
<div class="a g" style="left:521.5px;top:295.5px;transform:scaleX(0.86)">73595</div>
<div class="a g" style="left:622.7px;top:295.5px;transform:scaleX(0.86)">2016-05-31</div>
<div class="a g" style="left:692.9px;top:295.5px;transform:scaleX(0.86)">2016-06-01</div>
<div class="a g" style="left:814.9px;top:295.5px;transform:scaleX(0.86)">13484</div>
<div class="a g" style="left:43.0px;top:314.5px;transform:scaleX(0.86)">7...</div>
<div class="a g" style="left:76.0px;top:314.5px;transform:scaleX(0.86)">73574</div>
<div class="a g" style="left:130.0px;top:314.5px;transform:scaleX(0.86)">838</div>
<div class="a g" style="left:202.0px;top:314.5px;transform:scaleX(0.86)">3</div>
<div class="a g" style="left:319.6px;top:314.5px;transform:scaleX(0.86)">4</div>
<div class="a g" style="left:424.0px;top:314.5px;transform:scaleX(0.86)">3038</div>
<div class="a g" style="left:520.6px;top:314.5px;transform:scaleX(0.89)">NULL</div>
<div class="a g" style="left:622.7px;top:314.5px;transform:scaleX(0.86)">2016-05-31</div>
<div class="a g" style="left:692.9px;top:314.5px;transform:scaleX(0.86)">2016-06-01</div>
<div class="a g" style="left:814.9px;top:314.5px;transform:scaleX(0.86)">19976</div>
<div class="a g" style="left:43.0px;top:333.5px;transform:scaleX(0.86)">7...</div>
<div class="a g" style="left:76.0px;top:333.5px;transform:scaleX(0.86)">73575</div>
<div class="a g" style="left:130.0px;top:333.5px;transform:scaleX(0.86)">28</div>
<div class="a g" style="left:202.0px;top:333.5px;transform:scaleX(0.86)">2</div>
<div class="a g" style="left:319.6px;top:333.5px;transform:scaleX(0.86)">4</div>
<div class="a g" style="left:424.0px;top:333.5px;transform:scaleX(0.86)">1055</div>
<div class="a g" style="left:520.6px;top:333.5px;transform:scaleX(0.89)">NULL</div>
<div class="a g" style="left:622.7px;top:333.5px;transform:scaleX(0.86)">2016-05-31</div>
<div class="a g" style="left:692.9px;top:333.5px;transform:scaleX(0.86)">2016-06-01</div>
<div class="a g" style="left:814.9px;top:333.5px;transform:scaleX(0.86)">19336</div>
<div class="a g" style="left:43.0px;top:352.5px;transform:scaleX(0.86)">7...</div>
<div class="a g" style="left:76.0px;top:352.5px;transform:scaleX(0.86)">73576</div>
<div class="a g" style="left:130.0px;top:352.5px;transform:scaleX(0.86)">915</div>
<div class="a g" style="left:202.0px;top:352.5px;transform:scaleX(0.86)">3</div>
<div class="a g" style="left:319.6px;top:352.5px;transform:scaleX(0.86)">4</div>
<div class="a g" style="left:424.0px;top:352.5px;transform:scaleX(0.86)">3115</div>
<div class="a g" style="left:520.6px;top:352.5px;transform:scaleX(0.89)">NULL</div>
<div class="a g" style="left:622.7px;top:352.5px;transform:scaleX(0.86)">2016-05-31</div>
<div class="a g" style="left:692.9px;top:352.5px;transform:scaleX(0.86)">2016-06-01</div>
<div class="a g" style="left:814.9px;top:352.5px;transform:scaleX(0.86)">15011</div>
<div class="a g" style="left:43.0px;top:371.5px;transform:scaleX(0.86)">7...</div>
<div class="a g" style="left:76.0px;top:371.5px;transform:scaleX(0.86)">73577</div>
<div class="a g" style="left:130.0px;top:371.5px;transform:scaleX(0.86)">162</div>
<div class="a g" style="left:202.0px;top:371.5px;transform:scaleX(0.86)">20</div>
<div class="a g" style="left:319.6px;top:371.5px;transform:scaleX(0.86)">4</div>
<div class="a g" style="left:424.0px;top:371.5px;transform:scaleX(0.86)">1323</div>
<div class="a g" style="left:520.6px;top:371.5px;transform:scaleX(0.89)">NULL</div>
<div class="a g" style="left:622.7px;top:371.5px;transform:scaleX(0.86)">2016-05-31</div>
<div class="a g" style="left:692.9px;top:371.5px;transform:scaleX(0.86)">2016-06-01</div>
<div class="a g" style="left:814.9px;top:371.5px;transform:scaleX(0.86)">12243</div>
<div class="a g" style="left:43.0px;top:390.5px;transform:scaleX(0.86)">7...</div>
<div class="a g" style="left:76.0px;top:390.5px;transform:scaleX(0.86)">73578</div>
<div class="a g" style="left:130.0px;top:390.5px;transform:scaleX(0.86)">1018</div>
<div class="a g" style="left:202.0px;top:390.5px;transform:scaleX(0.86)">16</div>
<div class="a g" style="left:319.6px;top:390.5px;transform:scaleX(0.86)">4</div>
<div class="a g" style="left:424.0px;top:390.5px;transform:scaleX(0.86)">3218</div>
<div class="a g" style="left:520.6px;top:390.5px;transform:scaleX(0.89)">NULL</div>
<div class="a g" style="left:622.7px;top:390.5px;transform:scaleX(0.86)">2016-05-31</div>
<div class="a g" style="left:692.9px;top:390.5px;transform:scaleX(0.86)">2016-06-01</div>
<div class="a g" style="left:814.9px;top:390.5px;transform:scaleX(0.86)">14506</div>
<div class="a g" style="left:43.0px;top:409.5px;transform:scaleX(0.86)">7...</div>
<div class="a g" style="left:76.0px;top:409.5px;transform:scaleX(0.86)">73579</div>
<div class="a g" style="left:130.0px;top:409.5px;transform:scaleX(0.86)">983</div>
<div class="a g" style="left:202.0px;top:409.5px;transform:scaleX(0.86)">2</div>
<div class="a g" style="left:319.6px;top:409.5px;transform:scaleX(0.86)">4</div>
<div class="a g" style="left:424.0px;top:409.5px;transform:scaleX(0.86)">3183</div>
<div class="a g" style="left:520.6px;top:409.5px;transform:scaleX(0.89)">NULL</div>
<div class="a g" style="left:622.7px;top:409.5px;transform:scaleX(0.86)">2016-05-31</div>
<div class="a g" style="left:692.9px;top:409.5px;transform:scaleX(0.86)">2016-06-01</div>
<div class="a g" style="left:814.9px;top:409.5px;transform:scaleX(0.86)">18601</div>
</div><!--/grid-->
<!-- grid scrollbars -->
<div class="a" style="left:844px;top:220px;width:17px;height:227px;background:#e8e8ec"></div>
<div class="a" style="left:37px;top:430px;width:824px;height:17px;background:#e8e8ec"></div>
<div class="a" style="left:849px;top:396px;width:8px;height:17px;background:#c2c3c9"></div>
<div class="a" style="left:54px;top:434px;width:348px;height:9px;background:#c2c3c9"></div>

<!-- STATUS BAR -->
<div class="a" style="left:32px;top:453px;width:834px;height:6px;background:#f0e68c"></div>
<svg style="left:36.5px;top:456px" width="14" height="4" viewBox="0 0 14 4"><ellipse cx="6.8" cy="6" rx="6.6" ry="6" fill="#43b14b"/><ellipse cx="6.8" cy="3.4" rx="4.6" ry="2.4" fill="#8fdb8f"/></svg>
<div class="a" style="left:300px;top:457px;width:1px;height:2px;background:#b9af6a"></div><div class="a" style="left:301px;top:457px;width:1px;height:2px;background:#fbf7d2"></div><div class="a" style="left:450px;top:457px;width:1px;height:2px;background:#b9af6a"></div><div class="a" style="left:451px;top:457px;width:1px;height:2px;background:#fbf7d2"></div><div class="a" style="left:606px;top:457px;width:1px;height:2px;background:#b9af6a"></div><div class="a" style="left:607px;top:457px;width:1px;height:2px;background:#fbf7d2"></div><div class="a" style="left:729px;top:457px;width:1px;height:2px;background:#b9af6a"></div><div class="a" style="left:730px;top:457px;width:1px;height:2px;background:#fbf7d2"></div><div class="a" style="left:784px;top:457px;width:1px;height:2px;background:#b9af6a"></div><div class="a" style="left:785px;top:457px;width:1px;height:2px;background:#fbf7d2"></div>
<div class="a" style="left:31px;top:84px;width:1px;height:375px;background:#8593b0"></div><div class="a" style="left:866px;top:84px;width:1px;height:375px;background:#8593b0"></div>
<div id="arrows">
<svg style="left:525px;top:69.5px" width="9" height="8" viewBox="0 0 9 8"><path d="M0 3.9H3.4" stroke="#6b5a2c" stroke-width="1"/><path d="M3.6 0.4V7.6" stroke="#6b5a2c" stroke-width="1.1"/><path d="M4 1.5H8V5.4H4" fill="none" stroke="#6b5a2c" stroke-width="1"/><path d="M4 5.4H8" stroke="#6b5a2c" stroke-width="1.8"/></svg>
<svg style="left:543px;top:68.5px" width="10" height="9" viewBox="0 0 10 9"><path d="M0.6 0.6L9.4 8.4M9.4 0.6L0.6 8.4" stroke="#6b5a2c" stroke-width="1.35"/></svg>
<svg style="left:856px;top:68px" width="9" height="9" viewBox="0 0 9 9"><rect x="0" y="0" width="8.4" height="1.9" fill="#d3d9e6"/><path d="M0 3.6H8.4L4.2 8Z" fill="#d3d9e6"/></svg>
<svg style="left:851px;top:85px" width="14" height="15" viewBox="0 0 14 15"><path d="M1 6.5H12M1 8.5H12" stroke="#1e1e1e" stroke-width="1" shape-rendering="crispEdges"/><path d="M6.5 1.4V6M6.5 9V13.6" stroke="#1e1e1e" stroke-width="1"/><path d="M4.2 3.4L6.5 1L8.8 3.4M4.2 11.6L6.5 14L8.8 11.6" stroke="#1e1e1e" stroke-width="1" fill="none"/></svg>
<svg style="left:853px;top:107px" width="9" height="5" viewBox="0 0 9 5"><path d="M0 5H9L4.5 0Z" fill="#868999"/></svg>
<svg style="left:853px;top:163.5px" width="9" height="5" viewBox="0 0 9 5"><path d="M0 0H9L4.5 5Z" fill="#868999"/></svg>
<svg style="left:98px;top:179px" width="5" height="9" viewBox="0 0 5 9"><path d="M5 0V9L0 4.5Z" fill="#868999"/></svg>
<svg style="left:838px;top:179px" width="5" height="9" viewBox="0 0 5 9"><path d="M0 0V9L5 4.5Z" fill="#868999"/></svg>
<svg style="left:848.5px;top:226px" width="9" height="5" viewBox="0 0 9 5"><path d="M0 5H9L4.5 0Z" fill="#868999"/></svg>
<svg style="left:848.5px;top:419px" width="9" height="5" viewBox="0 0 9 5"><path d="M0 0H9L4.5 5Z" fill="#868999"/></svg>
<svg style="left:43px;top:434px" width="5" height="9" viewBox="0 0 5 9"><path d="M5 0V9L0 4.5Z" fill="#868999"/></svg>
<svg style="left:833.5px;top:434px" width="5" height="9" viewBox="0 0 5 9"><path d="M0 0V9L5 4.5Z" fill="#868999"/></svg>
<svg style="left:83px;top:183px" width="6" height="4" viewBox="0 0 6 4"><path d="M0 0H6L3 3.2Z" fill="#1b1b1b"/></svg>
</div>
</body></html>
